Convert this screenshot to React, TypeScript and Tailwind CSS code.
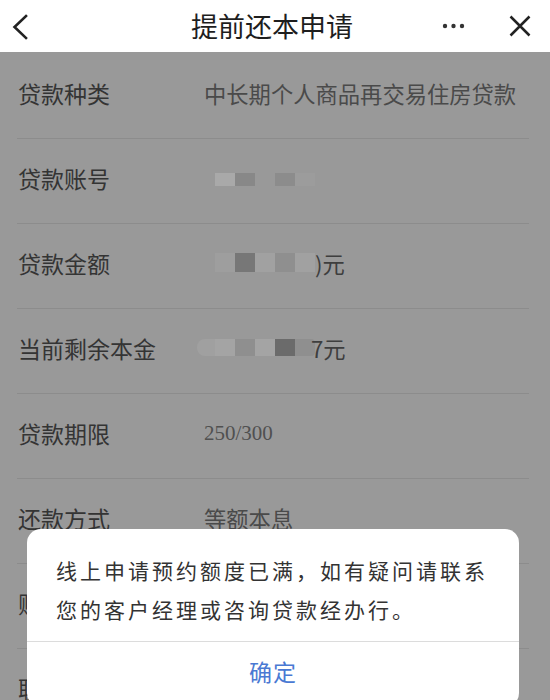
import React from "react";

const font = "font-['Noto_Sans_CJK_SC','Noto_Sans',sans-serif]";

function Row({ label, children }: { label: string; children?: React.ReactNode }) {
  return (
    <div className="h-[85px] flex items-center border-b border-[#8c8c8c] pb-[6px]">
      <div className="w-[187px] shrink-0 pl-[1px] text-[23px] text-[#343434] leading-none">{label}</div>
      <div className="flex items-center text-[22.3px] text-[#4a4a4a] leading-none">{children}</div>
    </div>
  );
}

function B({ w = 20, h, c, cls = "" }: { w?: number; h: number; c: string; cls?: string }) {
  return <span className={"inline-block shrink-0 " + cls} style={{ width: w, height: h, backgroundColor: c }} />;
}

export default function App() {
  return (
    <div className={"relative w-[550px] h-[700px] overflow-hidden bg-[#999999] " + font}>
      {/* header */}
      <div className="h-[52px] bg-white flex items-center justify-between relative">
        <svg className="ml-[10px]" width="20" height="28" viewBox="0 0 20 28">
          <path d="M16 4 L4.5 15 L16 26" fill="none" stroke="#222" strokeWidth="2.6" strokeLinecap="square" />
        </svg>
        <div className="absolute left-0 right-0 top-0 h-[52px] flex items-center justify-center pointer-events-none">
          <span className="text-[27px] text-[#1e1e1e] leading-none pr-[6px] pb-[2px]">提前还本申请</span>
        </div>
        <div className="flex items-center mr-[18px] gap-[42px]">
          <svg width="24" height="8" viewBox="0 0 24 8">
            <circle cx="3" cy="4" r="2.2" fill="#333" />
            <circle cx="11.5" cy="4" r="2.2" fill="#333" />
            <circle cx="20" cy="4" r="2.2" fill="#333" />
          </svg>
          <svg width="24" height="24" viewBox="0 0 24 24">
            <path d="M2.5 2.5 L21.5 21.5 M21.5 2.5 L2.5 21.5" fill="none" stroke="#222" strokeWidth="2.5" />
          </svg>
        </div>
      </div>

      {/* rows */}
      <div className="pl-[17px] pr-[21px] pt-[2px]">
        <Row label="贷款种类">中长期个人商品再交易住房贷款</Row>
        <Row label="贷款账号">
          <span className="w-[11px]" />
          <span className="flex items-center mt-[2px]">
            <B h={13} c="#a9a9a9" />
            <B h={13} c="#888888" />
            <B h={13} c="#999999" />
            <B h={13} c="#8c8c8c" />
            <B h={13} c="#9c9c9c" />
          </span>
        </Row>
        <Row label="贷款金额">
          <span className="w-[11px]" />
          <B h={19} c="#9e9e9e" />
          <B h={19} c="#777777" />
          <B h={19} c="#a1a1a1" />
          <B h={19} c="#8f8f8f" />
          <B h={19} c="#a1a1a1" />
          <span className="text-[#3e3e3e]">)元</span>
        </Row>
        <Row label="当前剩余本金">
          <span className="-ml-[7px] flex items-center">
            <B w={18} h={17} c="#a0a0a0" cls="rounded-l-[8px]" />
            <B h={17} c="#a4a4a4" />
            <B h={17} c="#8f8f8f" />
            <B h={17} c="#a4a4a4" />
            <B h={17} c="#6b6b6b" />
            <B h={17} c="#8f8f8f" cls="rounded-r-[4px]" />
          </span>
          <span className="text-[#3e3e3e] -ml-[4px]">7元</span>
        </Row>
        <Row label="贷款期限">
          <span className="font-['Liberation_Serif',serif] text-[21px] text-[#505050]">250/300</span>
        </Row>
        <Row label="还款方式">等额本息</Row>
        <Row label="账户余额">元</Row>
        <Row label="联系电话" />
      </div>

      {/* dialog */}
      <div className="absolute left-[27px] top-[529px] w-[492px] h-[178px] bg-white rounded-[14px] flex flex-col">
        <div className="pl-[29px] pr-[10px] pt-[22px] pb-[12px] text-[21px] leading-[39px] tracking-[3px] text-[#333]">
          <div className="whitespace-nowrap">线上申请预约额度已满，如有疑问请联系</div>
          <div className="whitespace-nowrap">您的客户经理或咨询贷款经办行。</div>
        </div>
        <div className="border-t border-[#dcdcdc] h-[60px] flex items-center justify-center">
          <span className="text-[23px] text-[#4a79d3] leading-none tracking-[1px]">确定</span>
        </div>
      </div>
    </div>
  );
}
